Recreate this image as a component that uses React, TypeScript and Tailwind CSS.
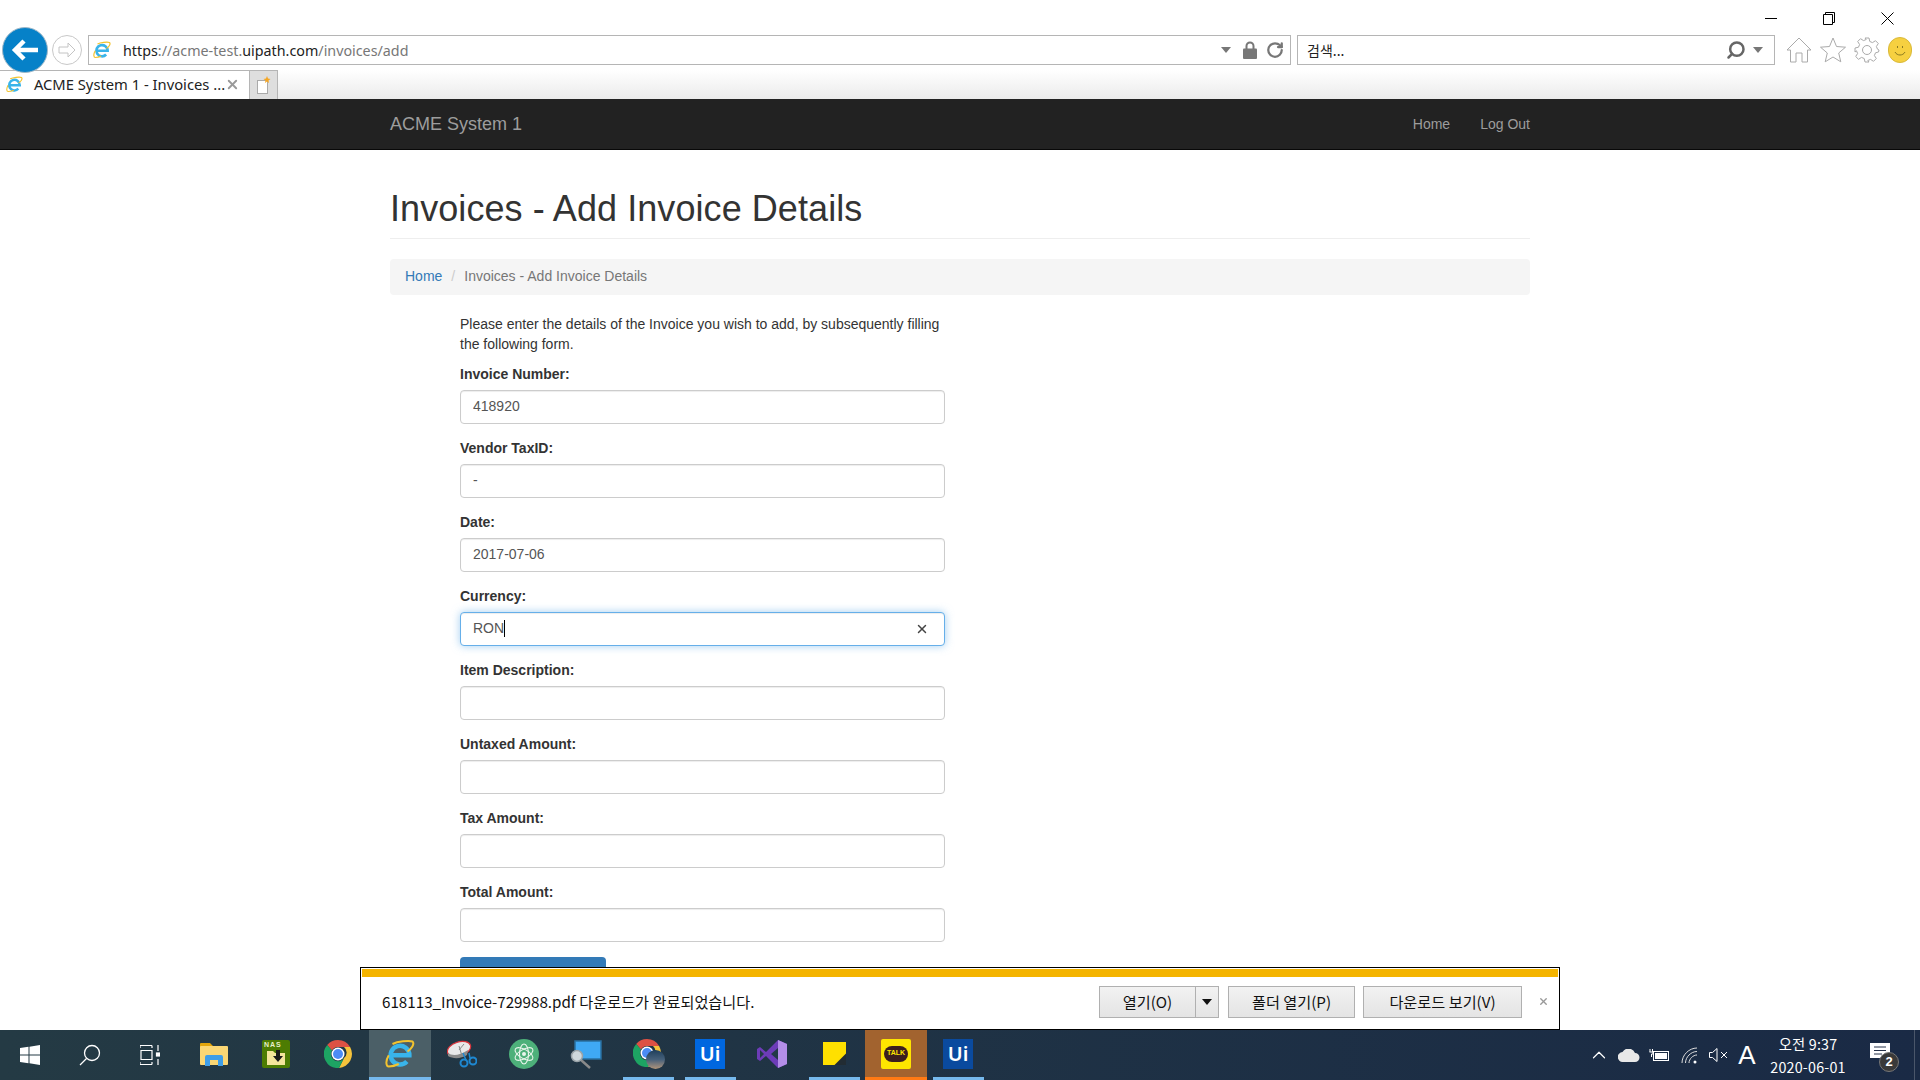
import { X, Search, ChevronUp, RotateCw } from "lucide-react";

const sans = "font-['Liberation_Sans',sans-serif]";
const ui = "font-['Noto_Sans','Noto_Sans_CJK_KR',sans-serif]";
const kr = "font-['Noto_Sans_CJK_KR','Noto_Sans',sans-serif]";

const fields = [
  { label: "Invoice Number:", value: "418920" },
  { label: "Vendor TaxID:", value: "-" },
  { label: "Date:", value: "2017-07-06" },
  { label: "Currency:", value: "RON", focused: true },
  { label: "Item Description:", value: "" },
  { label: "Untaxed Amount:", value: "" },
  { label: "Tax Amount:", value: "" },
  { label: "Total Amount:", value: "" },
];

const IeLogo = ({ size = 20 }: { size?: number }) => (
  <svg width={size} height={size} viewBox="0 0 24 24" fill="none">
    <path d="M4.5 13h15a7.5 7.5 0 1 0-2 5" stroke="#39b4ea" strokeWidth="3.6" />
    <path d="M6 4C10 2 19 1 22 2c2 2-1 6-4 8M3 13c-3 5-2 9 0 9 3 0 6-1 8-2" stroke="#f3c32f" strokeWidth="1.6" />
  </svg>
);

const ChromeLogo = () => (
  <svg width="28" height="28" viewBox="0 0 28 28">
    <path d="M14 0a14 14 0 0 1 12.1 7H14a7 7 0 0 0-6.1 3.5L3.2 5A14 14 0 0 1 14 0z" fill="#dd5144" />
    <path d="M26.1 7A14 14 0 0 1 15 28l5-10a7 7 0 0 0 0-11z" fill="#f5c33b" />
    <path d="M3.2 5A14 14 0 0 0 15 28l5-10a7 7 0 0 1-12-7.500z" fill="#1da463" />
    <circle cx="14" cy="14" r="6.500" fill="#fff" />
    <circle cx="14" cy="14" r="5" fill="#4c8bf5" />
  </svg>
);

const Explorer = () => (
  <svg width="28" height="24" viewBox="0 0 28 24">
    <path d="M0 2a1 1 0 0 1 1-1h9l3 3h14v3H0z" fill="#e2a50c" />
    <rect x="0" y="4" width="28" height="19" rx="1" fill="#fbd774" />
    <path d="M5 24v-9a2 2 0 0 1 2-2h14a2 2 0 0 1 2 2v9h-5v-6h-8v6z" fill="#3f9ee8" />
  </svg>
);

const Nas = () => (
  <div className="w-[28px] h-[28px] bg-[#4d7c02] rounded-[2px] flex flex-col items-center overflow-hidden">
    <span className={`${sans} text-[7px] leading-[9px] font-bold text-[#e8f0c8] self-start pl-[2px] tracking-[1px]`}>NAS</span>
    <svg width="20" height="17" viewBox="0 0 20 17">
      <path d="M1 2h6l2 2h10v12H1z" fill="#f4e59a" />
      <path d="M10 1h4v6h3l-5 6-5-6h3z" fill="#1a1a1a" />
    </svg>
  </div>
);

const Snip = () => (
  <svg width="30" height="28" viewBox="0 0 30 28" fill="none">
    <ellipse cx="12" cy="9" rx="12" ry="7" transform="rotate(-18 12 9)" fill="#e9e9e9" stroke="#d9363e" strokeWidth="1.200" />
    <path d="M1 13c4 3 11 3 20-3l-1 5c-6 4-14 4-19 1z" fill="#8b8b8b" />
    <path d="M12 6l3 10M17 4l-5 6" stroke="#888" strokeWidth="1" />
    <circle cx="17" cy="23" r="3.500" stroke="#1e88d2" strokeWidth="2" />
    <circle cx="26" cy="21" r="3.500" stroke="#1e88d2" strokeWidth="2" />
    <path d="M16 13l3 7M22 13l1 5" stroke="#1e88d2" strokeWidth="1.500" />
  </svg>
);

const Atom = () => (
  <svg width="30" height="30" viewBox="0 0 30 30" fill="none">
    <circle cx="15" cy="15" r="15" fill="#4db07a" />
    <circle cx="15" cy="15" r="2" fill="#e9f5ec" />
    <g stroke="#e9f5ec" strokeWidth="1.100">
      <ellipse cx="15" cy="15" rx="10" ry="4.500" transform="rotate(30 15 15)" />
      <ellipse cx="15" cy="15" rx="10" ry="4.500" transform="rotate(-30 15 15)" />
      <ellipse cx="15" cy="15" rx="10" ry="4.500" transform="rotate(90 15 15)" />
    </g>
  </svg>
);

const Magnifier = () => (
  <svg width="32" height="30" viewBox="0 0 32 30" fill="none">
    <rect x="5" y="2" width="26" height="18" fill="#3fa9f5" stroke="#2a6f9e" strokeWidth="1.500" />
    <path d="M11 21l9 8" stroke="#8a8a8a" strokeWidth="2.500" />
    <circle cx="7" cy="17" r="5.500" fill="#cfd8dc" stroke="#9aa3a8" strokeWidth="1.500" />
  </svg>
);

const Chrome2 = () => (
  <div className="relative w-[30px] h-[30px]">
    <ChromeLogo />
    <div className="absolute right-[-2px] bottom-0 w-[19px] h-[19px] rounded-full bg-linear-to-b from-[#1f3f5c] via-[#46607a] to-[#b09478]" />
  </div>
);

const UiLogo = ({ bg }: { bg: string }) => (
  <div className={`w-[30px] h-[30px] ${bg} flex items-center justify-center`}>
    <span className={`${ui} text-white text-[20px] font-semibold leading-none`}>Ui</span>
  </div>
);

const VsLogo = () => (
  <svg width="30" height="30" viewBox="0 0 30 30">
    <path d="M21 1l9 4v20l-9 4-12-12-6 5-3-2V10l3-2 6 5z" fill="#6d3cb8" />
    <path d="M21 1l9 4v20l-9 4z" fill="#b48ee8" />
    <path d="M21 9l-7 6 7 6z" fill="#223a45" />
    <path d="M3 11v8l4-4z" fill="#223a45" />
  </svg>
);

const Sticky = () => (
  <svg width="23" height="23" viewBox="0 0 24 24">
    <rect width="24" height="24" fill="#ffe000" />
    <path d="M12 24l12-12v12z" fill="#222c33" />
  </svg>
);

const Talk = () => (
  <div className="w-[30px] h-[30px] bg-[#fee500] rounded-[2px] flex items-center justify-center">
    <div className={`${sans} w-[24px] h-[16px] rounded-full bg-[#3c1e1e] text-[#fee500] text-[7px] font-bold flex items-center justify-center`}>TALK</div>
  </div>
);

const apps = [
  { key: "explorer", node: <Explorer /> },
  { key: "nas", node: <Nas /> },
  { key: "chrome", node: <ChromeLogo /> },
  { key: "ie", node: <IeLogo size={30} />, active: "bg-[#4b5f67] border-[#76b9ed]" },
  { key: "snip", node: <Snip /> },
  { key: "atom", node: <Atom /> },
  { key: "magnifier", node: <Magnifier /> },
  { key: "chrome2", node: <Chrome2 />, open: true },
  { key: "ui", node: <UiLogo bg="bg-[#0067df]" />, open: true },
  { key: "vs", node: <VsLogo /> },
  { key: "sticky", node: <Sticky />, open: true },
  { key: "talk", node: <Talk />, active: "bg-[#a2632f] border-[#ff7a14]" },
  { key: "ui2", node: <UiLogo bg="bg-[#0a4a9e]" />, open: true },
];

const BrowserChrome = () => (
  <div className="h-[99px] shrink-0 bg-white flex flex-col">
    <div className="h-[70px] flex relative">
      <div className="absolute left-[2px] top-[27px] w-[46px] h-[46px] rounded-full bg-[#0681c8] border border-[#9fb8c8] flex items-center justify-center z-10">
        <svg width="28" height="24" viewBox="0 0 28 24" fill="none" stroke="#fff" strokeWidth="4.500">
          <path d="M13 3L4 12l9 9M4 12h23" />
        </svg>
      </div>
      <div className="ml-[52px] mt-[35px] w-[30px] h-[30px] rounded-full border border-[#c8c8c8] flex items-center justify-center">
        <svg width="18" height="16" viewBox="0 0 18 16" fill="none" stroke="#c4c4c4" strokeWidth="1">
          <path d="M10 1l7 7-7 7v-4H1V5h9z" />
        </svg>
      </div>
      <div className="ml-[6px] mt-[35px] w-[1203px] h-[30px] border border-[#b5b5b5] flex items-center pl-[4px] pr-[6px]">
        <IeLogo size={18} />
        <span className={`${ui} ml-[12px] pt-[1px] text-[14.3px] text-[#777]`}>
          <span className="text-[#222]">https</span>://acme-test.<span className="text-[#222]">uipath.com</span>/invoices/add
        </span>
        <svg className="ml-auto" width="10" height="6" viewBox="0 0 10 6"><path d="M0 0h10L5 6z" fill="#777" /></svg>
        <svg className="ml-[12px]" width="14" height="18" viewBox="0 0 14 18" fill="none">
          <path d="M3.500 8V5a3.500 3.500 0 0 1 7 0v3" stroke="#777" strokeWidth="2" />
          <rect x="0" y="7.500" width="14" height="10.500" rx="1" fill="#777" />
        </svg>
        <RotateCw className="ml-[9px]" size={18} color="#777" strokeWidth={3} />
      </div>
      <div className="ml-[6px] mt-[35px] w-[478px] h-[30px] border border-[#b5b5b5] flex items-center pl-[9px] pr-[11px]">
        <span className={`${kr} text-[14px] text-[#222]`}>검색...</span>
        <Search className="ml-auto -scale-x-100" size={20} color="#666" strokeWidth={3} />
        <svg className="ml-[7px]" width="10" height="6" viewBox="0 0 10 6"><path d="M0 0h10L5 6z" fill="#777" /></svg>
      </div>
      <div className="ml-[11px] mt-[35px] flex items-center gap-[8px] h-[30px]">
        <svg width="26" height="26" viewBox="0 0 26 26" fill="none" stroke="#aaa">
          <path d="M1 13L13 1l12 12-3.500 0V25H16V16h-6v9H4.500V13z" />
        </svg>
        <svg width="26" height="26" viewBox="0 0 26 26" fill="none" stroke="#aaa">
          <path d="M13 1l3.500 8.500 9 .7-6.800 5.800 2.100 8.800L13 20l-7.800 4.800 2.100-8.800L.5 10.200l9-.7z" />
        </svg>
        <svg width="26" height="26" viewBox="0 0 26 26" fill="none" stroke="#aaa">
          <path d="M11 1h4l.8 3.500 2.700 1.100 3-1.900 2.800 2.800-1.900 3 1.100 2.700L25 13v0l-.5 2-3 .8-1.100 2.700 1.900 3-2.800 2.800-3-1.900-2.700 1.100L15 25h-4l-.8-3.500-2.700-1.100-3 1.900-2.800-2.800 1.900-3-1.100-2.700L1 15v-4l3.500-.8 1.100-2.700-1.900-3 2.800-2.800 3 1.900 2.700-1.100z" />
          <circle cx="13" cy="13" r="4.500" />
        </svg>
        <div className="w-[24px] h-[26px] rounded-full bg-[#f6d040] border border-[#d9b93a] flex items-center justify-center">
          <svg width="16" height="16" viewBox="0 0 16 16" fill="none" stroke="#8a7a20" strokeWidth="1">
            <path d="M3 10c2 4 8 4 10 0M5.500 4v2M10.500 4v2" />
          </svg>
        </div>
      </div>
      <div className="absolute right-[4px] top-0 h-[36px] flex">
        <div className="w-[58px] flex items-center justify-center">
          <div className="w-[12px] h-px bg-black" />
        </div>
        <div className="w-[58px] flex items-center justify-center">
          <svg width="12" height="13" viewBox="0 0 12 13" fill="none" stroke="#000">
            <path d="M.5 2.500h9v10h-9zM2.500 2.500v-2h9v10h-2" />
          </svg>
        </div>
        <div className="w-[58px] flex items-center justify-center">
          <svg width="13" height="13" viewBox="0 0 13 13" stroke="#000"><path d="M.5.500l12 12M12.500.500l-12 12" /></svg>
        </div>
      </div>
    </div>
    <div className="h-[29px] flex bg-linear-to-b from-white to-[#ebebeb]">
      <div className="w-[250px] bg-white border-t border-r border-[#b5b5b5] flex items-center pl-[6px] pr-[9px] pb-[2px]">
        <IeLogo size={17} />
        <span className={`${ui} ml-[11px] text-[14.75px] text-[#222] whitespace-nowrap`}>ACME System 1 - Invoices ...</span>
        <X className="ml-auto" size={15} color="#999" strokeWidth={3} />
      </div>
      <div className="w-[28px] bg-[#dedede] border-t border-r border-[#b5b5b5] flex items-center justify-center">
        <svg width="14" height="18" viewBox="0 0 14 18">
          <rect x="0.500" y="4.500" width="10" height="13" fill="#fff" stroke="#aaa" />
          <path d="M10 0l1 2.500 2.500.5-2 1.500.5 2.500-2-1.500-2 1.500.5-2.500-2-1.500 2.500-.5z" fill="#f5a623" />
        </svg>
      </div>
    </div>
  </div>
);

const Navbar = () => (
  <div className="h-[51px] shrink-0 bg-[#222] border-b border-[#080808] flex justify-center">
    <div className={`${sans} w-[1140px] flex items-center text-[#9d9d9d]`}>
      <span className="text-[18px]">ACME System 1</span>
      <span className="ml-auto text-[14px]">Home</span>
      <span className="ml-[30px] text-[14px]">Log Out</span>
    </div>
  </div>
);

const Field = ({ label, value, focused }: { label: string; value: string; focused?: boolean }) => (
  <div className="mb-[15px]">
    <label className="block h-[20px] mb-[5px] text-[14px] leading-[18px] font-bold text-[#333]">{label}</label>
    {focused ? (
      <div className="h-[34px] px-[12px] flex items-center bg-white border border-[#66afe9] rounded-[4px] shadow-[inset_0_1px_1px_rgba(0,0,0,0.075),0_0_8px_rgba(102,175,233,0.6)] text-[14px] text-[#555]">
        {value}
        <span className="w-px h-[17px] bg-black" />
        <X className="ml-auto mr-[3px]" size={14} color="#444" strokeWidth={2.500} />
      </div>
    ) : (
      <input
        readOnly
        value={value}
        className="block w-full h-[34px] px-[12px] pb-[1px] bg-white border border-[#ccc] rounded-[4px] shadow-[inset_0_1px_1px_rgba(0,0,0,0.075)] text-[14px] text-[#555] outline-none"
      />
    )}
  </div>
);

const Page = () => (
  <div className={`${sans} flex-1 min-h-0 overflow-hidden bg-white flex justify-center`}>
    <div className="w-[1140px]">
      <div className="mt-[39px] pb-[9px] mb-[20px] border-b border-[#eee]">
        <h1 className="text-[36px] leading-[39.6px] tracking-[0.07px] text-[#333]">Invoices - Add Invoice Details</h1>
      </div>
      <div className="h-[36px] px-[15px] mb-[19px] bg-[#f5f5f5] rounded-[4px] flex items-center text-[14px]">
        <span className="text-[#337ab7]">Home</span>
        <span className="px-[9px] text-[#ccc]">/</span>
        <span className="text-[#777]">Invoices - Add Invoice Details</span>
      </div>
      <div className="ml-[70px] w-[485px]">
        <p className="mb-[11px] text-[14px] leading-[20px] text-[#333]">
          Please enter the details of the Invoice you wish to add, by subsequently filling the following form.
        </p>
        {fields.map((f) => (
          <Field key={f.label} {...f} />
        ))}
        <div className="w-[146px] h-[34px] bg-[#337ab7] rounded-[4px]" />
      </div>
    </div>
  </div>
);

const DownloadBar = () => (
  <div className={`${ui} absolute left-[360px] top-[967px] w-[1200px] h-[63px] bg-white border border-black flex flex-col`}>
    <div className="h-[8px] mx-px mt-px bg-[#f4b400]" />
    <div className="flex-1 flex items-center pl-[21px] pb-[3px] text-[15.2px] text-[#111]">
      <span className={kr}>618113_Invoice-729988.pdf 다운로드가 완료되었습니다.</span>
      <div className="ml-auto flex h-[32px] w-[120px] border border-[#b0b0b0] bg-linear-to-b from-[#f2f2f2] to-[#e4e4e4]">
        <span className={`${kr} flex-1 flex items-center justify-center`}>열기(O)</span>
        <span className="w-[23px] border-l border-[#b0b0b0] flex items-center justify-center">
          <svg width="10" height="6" viewBox="0 0 10 6"><path d="M0 0h10L5 6z" fill="#111" /></svg>
        </span>
      </div>
      <div className={`${kr} ml-[9px] h-[32px] w-[127px] border border-[#b0b0b0] bg-linear-to-b from-[#f2f2f2] to-[#e4e4e4] flex items-center justify-center`}>폴더 열기(P)</div>
      <div className={`${kr} ml-[8px] h-[32px] w-[159px] border border-[#b0b0b0] bg-linear-to-b from-[#f2f2f2] to-[#e4e4e4] flex items-center justify-center`}>다운로드 보기(V)</div>
      <X className="ml-[16px] mr-[10px]" size={11} color="#999" strokeWidth={3} />
    </div>
  </div>
);

const Taskbar = () => (
  <div className="h-[50px] shrink-0 bg-linear-to-r from-[#243a44] to-[#1a2a45] flex items-stretch text-white">
    <div className="w-[60px] flex items-center justify-center">
      <svg width="20" height="20" viewBox="0 0 20 20" fill="#fff">
        <path d="M0 3l8.500-1.200V9.500H0zM9.500 1.700L20 0v9.500H9.500zM0 10.500h8.500v7.700L0 17zM9.500 10.500H20V20L9.500 18.300z" />
      </svg>
    </div>
    <div className="w-[60px] flex items-center justify-center">
      <svg width="22" height="22" viewBox="0 0 22 22" fill="none" stroke="#fff" strokeWidth="1.300">
        <circle cx="13" cy="9" r="7.500" />
        <path d="M7.500 14.500L1 21" />
      </svg>
    </div>
    <div className="w-[60px] flex items-center justify-center">
      <svg width="20" height="20" viewBox="0 0 20 20" fill="none" stroke="#fff" strokeWidth="1.200">
        <path d="M0 .5h12M0 19.500h12M1 5.500h11v9H1zM0 3v-2.500M12 3v-2.500M0 17v2.500M12 17v2.500M18 0v6M18 14v6" />
        <rect x="16.500" y="8" width="3" height="3" fill="#fff" />
      </svg>
    </div>
    <div className="flex ml-[3px]">
      {apps.map((a) => (
        <div
          key={a.key}
          className={`relative w-[62px] flex items-center justify-center border-b-[3px] ${a.active ?? "border-transparent"}`}
        >
          {a.node}
          {a.open && <div className="absolute bottom-[-3px] left-[6px] w-[51px] h-[3px] bg-[#76b9ed]" />}
        </div>
      ))}
    </div>
    <div className="ml-auto flex items-center">
      <ChevronUp size={22} color="#fff" strokeWidth={1.300} />
      <svg className="ml-[8px]" width="22" height="13" viewBox="0 0 22 13">
        <path d="M5 13a5 5 0 0 1-.5-10A7 7 0 0 1 17 4a4.500 4.500 0 0 1 0 9z" fill="#e8e8e8" />
      </svg>
      <svg className="ml-[9px]" width="20" height="14" viewBox="0 0 20 14" fill="none" stroke="#fff">
        <rect x="4.500" y="3.500" width="15" height="9" />
        <rect x="6" y="5" width="12" height="6" fill="#fff" stroke="none" />
        <path d="M1 1v3M3.500 1v3M.5 4h3.500v2H2.500v3" />
      </svg>
      <svg className="ml-[12px]" width="17" height="17" viewBox="0 0 17 17" fill="none" stroke="#ddd">
        <path d="M1 16C1 8 8 1 16 1M4.500 16c0-6 5.500-11.500 11.500-11.500M8 16c0-4 4-8 8-8" />
        <circle cx="14" cy="15" r="1.500" fill="#fff" stroke="none" />
      </svg>
      <svg className="ml-[11px]" width="20" height="14" viewBox="0 0 20 14" fill="none" stroke="#fff">
        <path d="M.5 4.500h3L8 .5v13l-4.500-4h-3zM12 4l6 6M18 4l-6 6" />
      </svg>
      <span className={`${sans} ml-[9px] text-[26px] w-[18px] text-center`}>A</span>
      <div className={`${kr} ml-[7px] w-[90px] flex flex-col items-center text-[14.300px] leading-[23px] tracking-[0.2px]`}>
        <span>오전 9:37</span>
        <span>2020-06-01</span>
      </div>
      <div className="relative ml-[17px] mr-[24px] w-[20px] h-[20px] mb-[4px]">
        <svg width="20" height="17" viewBox="0 0 20 17">
          <path d="M0 0h20v15H0z" fill="#fff" />
          <path d="M4 4h12M4 7.500h12M4 11h8" stroke="#26324a" strokeWidth="1" />
        </svg>
        <div className={`${sans} absolute left-[9px] top-[9px] w-[20px] h-[20px] rounded-full bg-[#3a3a3a] border border-[#777] text-[13px] font-bold flex items-center justify-center`}>2</div>
      </div>
      <div className="w-px h-full bg-[#4a566a] mr-[5px]" />
    </div>
  </div>
);

export default function App() {
  return (
    <div className="relative w-[1920px] h-[1080px] overflow-hidden flex flex-col bg-white">
      <BrowserChrome />
      <Navbar />
      <Page />
      <DownloadBar />
      <Taskbar />
    </div>
  );
}
